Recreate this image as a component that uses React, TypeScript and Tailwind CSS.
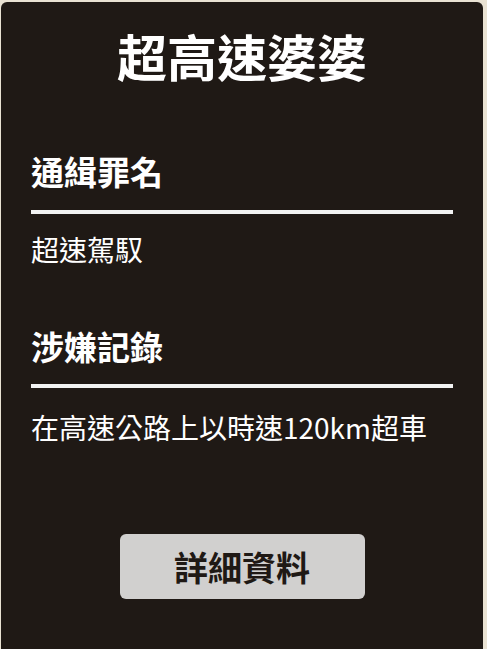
export default function App() {
  return (
    <div className="min-h-[649px] bg-[#e9e2d3] pl-[1px] pr-[4px] pt-[2px] font-['Noto_Sans_CJK_TC','Noto_Sans',sans-serif]">
      <div className="min-h-[660px] rounded-t-[6px] bg-[#1f1915] px-[30px] pt-[28px] text-white">
        <h1 className="text-center text-[50px] font-bold leading-none">超高速婆婆</h1>

        <h2 className="mt-[75px] text-[33px] font-bold leading-none">通緝罪名</h2>
        <div className="mt-[22px] h-[4px] bg-[#f2f2f2]" />
        <p className="mt-[21px] text-[28px] leading-none">超速駕馭</p>

        <h2 className="mt-[67px] text-[33px] font-bold leading-none">涉嫌記錄</h2>
        <div className="mt-[21px] h-[4px] bg-[#f2f2f2]" />
        <p className="mt-[25px] text-[28px] leading-none">在高速公路上以時速120km超車</p>

        <div className="mt-[93px] flex justify-center">
          <button className="flex h-[65px] w-[245px] items-center justify-center rounded-[6px] bg-[#d1d0cf] text-[34px] font-bold leading-none text-[#1f1915]">
            詳細資料
          </button>
        </div>
      </div>
    </div>
  );
}
